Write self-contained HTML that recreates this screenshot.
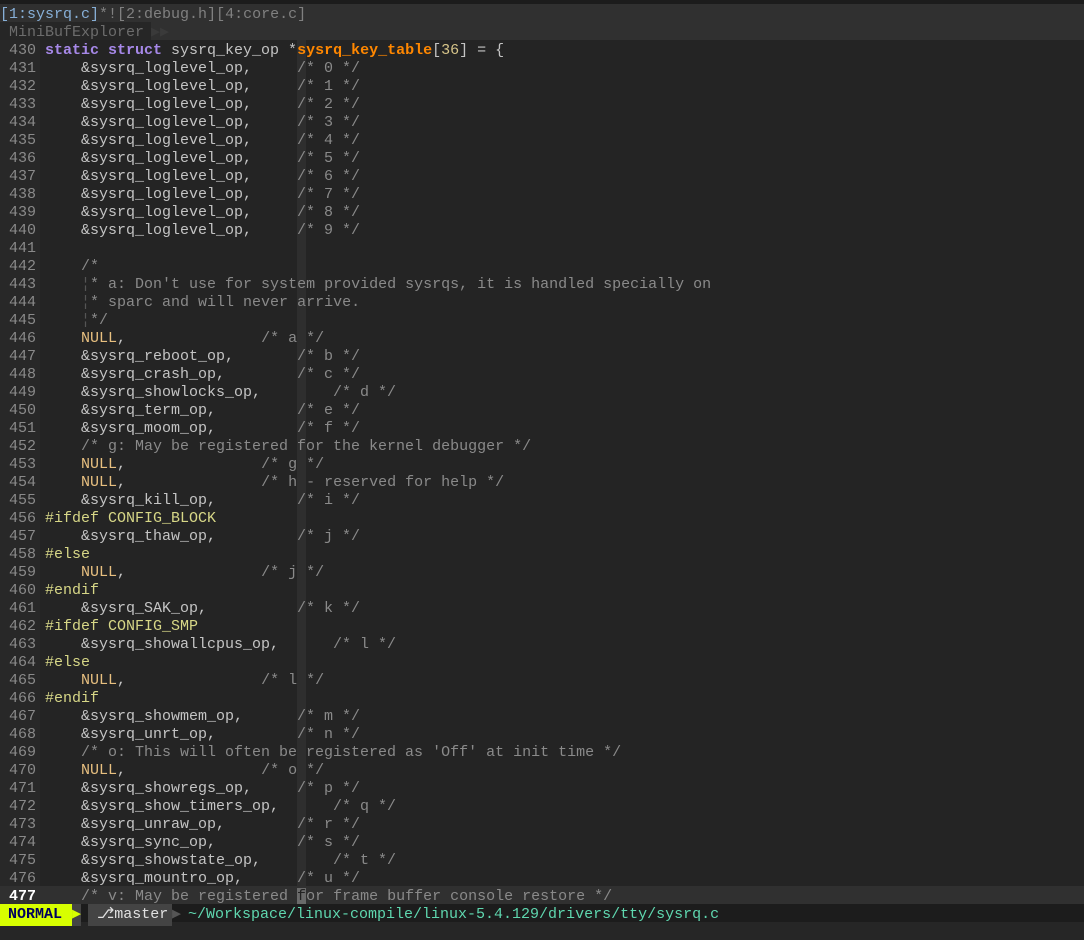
<!DOCTYPE html>
<html><head><meta charset="utf-8"><style>
body{margin:0;width:1084px;height:940px;background:#262626;overflow:hidden;font-family:"Liberation Mono","DejaVu Sans Mono",monospace;font-size:15px;color:#c4c4c4;position:relative}
.row{position:absolute;left:0;width:1084px;height:18px;line-height:22px;white-space:pre}
#top{top:0;height:4px;background:#1c1c1c}
#tab{top:4px;background:#303030;color:#808080}
#mbe{top:22px;background:#303030;color:#6c6c6c}
#code{position:absolute;top:40px;left:0;width:1084px;height:846px;background:#242424}
#gut{position:absolute;top:40px;left:0;width:40px;height:864px;background:#282828}
#cc{position:absolute;top:40px;left:297px;width:9px;height:846px;background:#2e2e2e}
.ln{position:absolute;left:0;width:36px;text-align:right;color:#8a8a8a}
.tx{position:absolute;left:45px}
.c{color:#8a8a8a}.k{color:#a688e8;font-weight:bold}.f{color:#ff8700;font-weight:bold}.n{color:#d7c58a}.p{color:#d7d787}.nl{color:#e8c080}.g{color:#555}
#status{top:904px;background:#1c1c1c}
</style></head><body>
<div class="row" id="top"></div>
<div class="row" id="tab"><span style="color:#87afd7">[1:sysrq.c]</span>*!<span>[2:debug.h][4:core.c]</span></div>
<div class="row" id="mbe"><span style="background:#262626;padding:0 6px 0 9px;display:inline-block;width:136px"><span>MiniBufExplorer</span></span><span style="color:#3a3a3a">▶▶</span></div>
<div id="code"></div><div id="gut"></div><div id="cc"></div>
<div id="lines"></div>
<div class="row" style="top:886px;background:#303030"><span class="ln" style="color:#fff;font-weight:bold">477</span><span class="tx c">    /* v: May be registered <span style="background:#6a6a6a;color:#222">f</span>or frame buffer console restore */</span></div>
<div class="row" id="status"><span style="position:absolute;left:0;width:72px;background:#d7ff00;color:#00005f;font-weight:bold;padding-left:8px;box-sizing:border-box">NORMAL</span><span style="position:absolute;left:72px;color:#d7ff00;background:#444">▶</span><span style="position:absolute;left:88px;width:84px;background:#444;color:#e0e0e0"> ⎇master</span><span style="position:absolute;left:172px;color:#555">▶</span><span style="position:absolute;left:188px;color:#5fd7af">~/Workspace/linux-compile/linux-5.4.129/drivers/tty/sysrq.c</span></div>
<script>
const L=[
'<span class="k">static struct</span> sysrq_key_op *<span class="f">sysrq_key_table</span>[<span class="n">36</span>] = {'];
for(let i=0;i<10;i++)L.push('    &amp;sysrq_loglevel_op,     <span class="c">/* '+i+' */</span>');
function e(n,col,ch){let s='    &amp;sysrq_'+n+'_op,';let len=4+7+n.length+4;return s+' '.repeat(col-len)+'<span class="c">/* '+ch+' */</span>';}
function nu(t){return '    <span class="nl">NULL</span>,               <span class="c">/* '+t+' */</span>';}
L.push('','<span class="c">    /*</span>','<span class="c">    <span class="g">¦</span>* a: Don\'t use for system provided sysrqs, it is handled specially on</span>','<span class="c">    <span class="g">¦</span>* sparc and will never arrive.</span>','<span class="c">    <span class="g">¦</span>*/</span>',
nu('a'),e('reboot',28,'b'),e('crash',28,'c'),e('showlocks',32,'d'),e('term',28,'e'),e('moom',28,'f'),
'<span class="c">    /* g: May be registered for the kernel debugger */</span>',nu('g'),nu('h - reserved for help'),e('kill',28,'i'),
'<span class="p">#ifdef CONFIG_BLOCK</span>',e('thaw',28,'j'),'<span class="p">#else</span>',nu('j'),'<span class="p">#endif</span>',e('SAK',28,'k'),
'<span class="p">#ifdef CONFIG_SMP</span>',e('showallcpus',32,'l'),'<span class="p">#else</span>',nu('l'),'<span class="p">#endif</span>',
e('showmem',28,'m'),e('unrt',28,'n'),'<span class="c">    /* o: This will often be registered as \'Off\' at init time */</span>',nu('o'),
e('showregs',28,'p'),e('show_timers',32,'q'),e('unraw',28,'r'),e('sync',28,'s'),e('showstate',32,'t'),e('mountro',28,'u'));
let h='';L.forEach((t,i)=>{h+='<div class="row" style="top:'+(40+i*18)+'px"><span class="ln">'+(430+i)+'</span><span class="tx">'+t+'</span></div>';});
document.getElementById('lines').innerHTML=h;
</script>
</body></html>
